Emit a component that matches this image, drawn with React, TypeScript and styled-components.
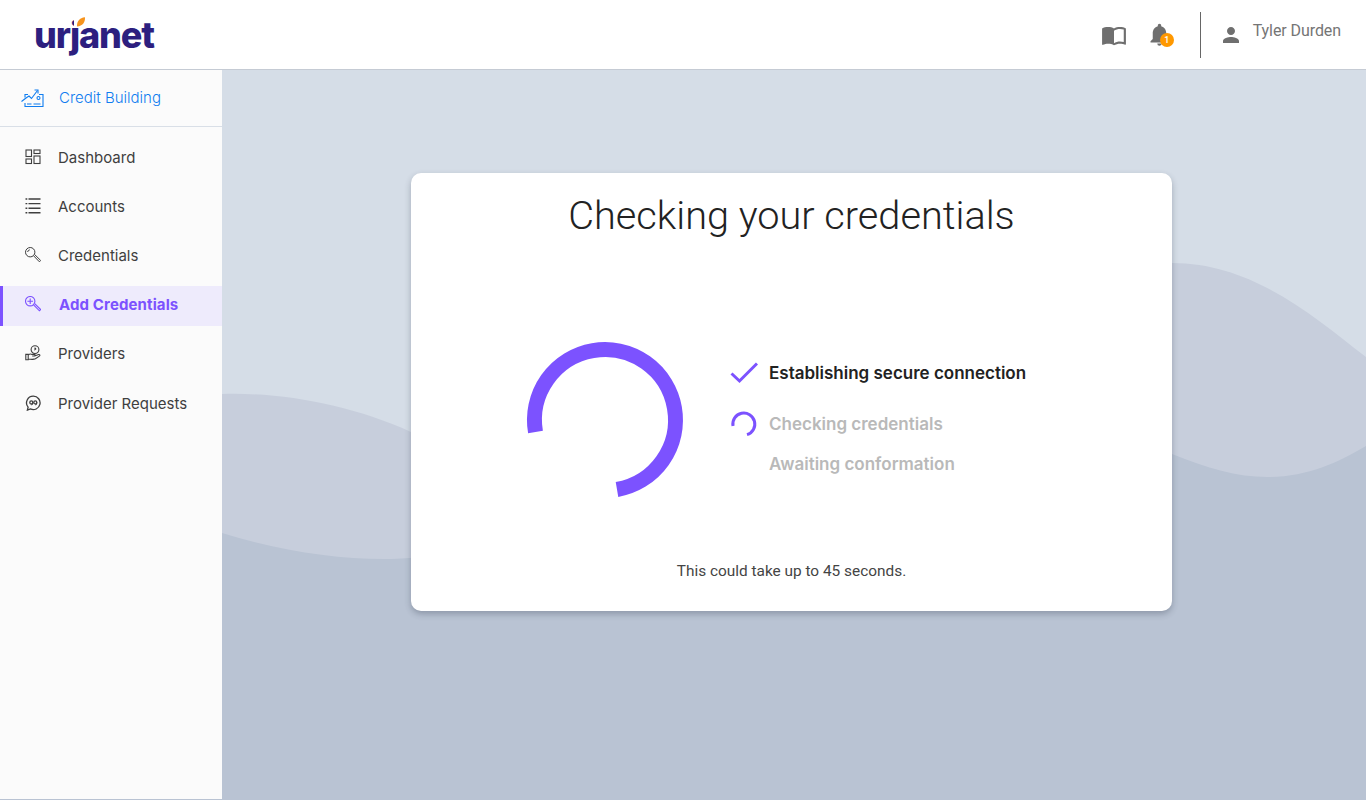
import React from 'react'
import styled, { createGlobalStyle } from 'styled-components'
import { MdImportContacts, MdNotifications, MdPerson } from 'react-icons/md'

const colors = {
  purple: '#7c52ff',
  blue: '#0f7df0',
  text: '#3f3f3f',
  dark: '#222222',
  muted: '#b9b9b9',
  grey: '#6f6f6f',
}

const GlobalStyle = createGlobalStyle`
  html, body {
    margin: 0;
    height: 100%;
    overflow: hidden;
    font-family: Inter, "Liberation Sans", sans-serif;
  }
  #root { height: 100%; }
`

const DashboardIcon = () => (
  <NavSvg viewBox="0 0 16 16" fill="none" stroke="currentColor" strokeWidth="1.1">
    <rect x="1" y="1" width="5.5" height="6.5" />
    <rect x="9" y="1" width="6" height="3.5" />
    <rect x="1" y="10" width="5.5" height="4.500" />
    <rect x="9" y="7" width="6" height="7.500" />
  </NavSvg>
)

const ListIcon = () => (
  <NavSvg viewBox="0 0 16 16" fill="none" stroke="currentColor" strokeWidth="1.4">
    <path d="M0.500 1h1.800M3.500 1h12M0.500 5.600h1.800M3.500 5.600h12M0.500 10.200h1.800M3.500 10.200h12M0.500 14.800h1.800M3.500 14.800h12" />
  </NavSvg>
)

const KeyIcon = () => (
  <NavSvg viewBox="0 0 16 16" fill="none" stroke="currentColor" strokeWidth="1">
    <circle cx="5.200" cy="5.200" r="4.700" />
    <path d="M8.600 8.800l5.800 6 1.300-1.300-6-5.900M2.600 5a2.600 2.600 0 0 1 2.200-2.200" />
  </NavSvg>
)

const AddKeyIcon = () => (
  <NavSvg viewBox="0 0 16 16" fill="none" stroke="currentColor" strokeWidth="1.1">
    <circle cx="5.200" cy="5.200" r="4.700" />
    <path d="M8.600 8.800l5.800 6 1.300-1.300-6-5.900M5.200 2.400v5.600M2.400 5.200H8" />
  </NavSvg>
)

const ProvidersIcon = () => (
  <NavSvg viewBox="0 0 16 16" fill="none" stroke="currentColor" strokeWidth="1.1">
    <circle cx="10" cy="4.600" r="3.900" />
    <path d="M10 2.600v2l1.200-1M.8 9.400h2.400v5.400H.8zM3.200 10c1.400-1.200 2.600-1.200 3.800-.6h2.400c1 0 1 1.600 0 1.600H7.200M9.600 11l4-1.500c1.200-.3 1.800.9.800 1.600l-4 2.700c-1.600.8-4.400.6-7.200.2" />
  </NavSvg>
)

const RequestsIcon = () => (
  <NavSvg viewBox="0 0 16 16" fill="none" stroke="currentColor" strokeWidth="1.3">
    <path d="M8.400 1.200a6.700 6.700 0 1 1-3 12.700l-3 1.200.7-2.900A6.700 6.700 0 0 1 8.400 1.200z" />
    <circle cx="6.300" cy="7.400" r="1.500" />
    <circle cx="10.300" cy="7.400" r="1.500" />
    <path d="M7.800 7.600c0 1.300-.5 2-1.400 2.400M11.800 7.600c0 1.300-.5 2-1.400 2.400" />
  </NavSvg>
)

const CreditIcon = () => (
  <svg width="23" height="19" viewBox="0 0 23 19" fill="none" stroke={colors.blue} strokeWidth="1.100">
    <path d="M4 8.500V5.500h3M18 5.500h4V17.500H4V14" />
    <path d="M0.500 12.500L5 9l3-2 2.500 2.500L16.500 1.500" />
    <path d="M13.500 1h3.500v3.500" />
    <circle cx="17.500" cy="9" r="1.500" />
    <path d="M6 15h4.500M12.500 15h7" />
  </svg>
)

const navItems = [
  { name: 'Dashboard', Icon: DashboardIcon },
  { name: 'Accounts', Icon: ListIcon },
  { name: 'Credentials', Icon: KeyIcon },
  { name: 'Add Credentials', Icon: AddKeyIcon, active: true },
  { name: 'Providers', Icon: ProvidersIcon },
  { name: 'Provider Requests', Icon: RequestsIcon },
]

export default function App() {
  return (
    <Page>
      <GlobalStyle />
      <Header>
        <Logo>
          urjanet
          <Leaf viewBox="0 0 11 10">
            <path d="M2.500 9.500C2.200 4.500 5 0.800 10.500 0.300 10.800 5.500 8 9.200 2.500 9.500z" fill="#f7941d" />
          </Leaf>
        </Logo>
        <HeaderRight>
          <HeaderIcon>
            <MdImportContacts size={26} />
          </HeaderIcon>
          <BellWrap>
            <MdNotifications size={27} />
            <Badge>1</Badge>
          </BellWrap>
          <Divider />
          <MdPerson size={24} />
          <UserName>Tyler Durden</UserName>
        </HeaderRight>
      </Header>

      <Body>
        <Sidebar>
          <SectionRow>
            <CreditIcon />
            <SectionLabel>Credit Building</SectionLabel>
          </SectionRow>
          <NavList>
            {navItems.map(({ name, Icon, active }) => (
              <NavItem key={name} $active={!!active}>
                <Icon />
                <NavLabel $active={!!active}>{name}</NavLabel>
              </NavItem>
            ))}
          </NavList>
        </Sidebar>

        <Main>
          <Waves viewBox="0 0 1144 730" preserveAspectRatio="none">
            <path
              d="M0 324C60 322 130 335 189 362C420 470 760 193 950 193C1030 193 1090 245 1144 287V730H0Z"
              fill="#c7cedc"
            />
            <path
              d="M0 463C60 482 120 490 170 489C400 480 800 320 950 384C985 398 1015 407 1045 407C1085 407 1115 393 1144 376V730H0Z"
              fill="#b9c3d3"
            />
          </Waves>

          <Card>
            <Title>Checking your credentials</Title>
            <Progress>
              <svg width="160" height="160" viewBox="0 0 160 160" fill="none">
                <path d="M10.500 92A70.500 70.500 0 1 1 92 149.500" stroke={colors.purple} strokeWidth="15" />
              </svg>
              <Steps>
                <Step $state="done">
                  <StepIcon>
                    <svg width="28" height="24" viewBox="0 0 28 24" fill="none">
                      <path d="M1.500 12.500L9.500 20L27 2.500" stroke={colors.purple} strokeWidth="3" />
                    </svg>
                  </StepIcon>
                  Establishing secure connection
                </Step>
                <StepGap />
                <Step $state="pending">
                  <StepIcon>
                    <svg width="28" height="28" viewBox="0 0 28 28" fill="none">
                      <path d="M3 16A11 11 0 1 1 17 24.600" stroke={colors.purple} strokeWidth="3" />
                    </svg>
                  </StepIcon>
                  Checking credentials
                </Step>
                <Step $state="pending">
                  <StepIcon />
                  Awaiting conformation
                </Step>
              </Steps>
            </Progress>
            <Note>This could take up to 45 seconds.</Note>
          </Card>
        </Main>
      </Body>
    </Page>
  )
}

const Page = styled.div`
  height: 100%;
  display: flex;
  flex-direction: column;
`

const Header = styled.header`
  height: 69px;
  flex: none;
  display: flex;
  align-items: center;
  justify-content: space-between;
  padding: 0 25px 0 34px;
  background: #fff;
  border-bottom: 1px solid #c5cbd4;
`

const Logo = styled.div`
  position: relative;
  font-family: Inter, sans-serif;
  font-size: 36px;
  font-weight: 800;
  letter-spacing: -1.2px;
  line-height: 44px;
  color: #2d1f7f;
`

const Leaf = styled.svg`
  position: absolute;
  left: 40px;
  top: 4px;
  width: 12px;
  height: 10px;
  background: #fff;
`

const HeaderRight = styled.div`
  display: flex;
  align-items: center;
  color: ${colors.grey};
`

const HeaderIcon = styled.div`
  display: flex;
  margin-right: 19px;
`

const BellWrap = styled.div`
  position: relative;
  display: flex;
  margin-right: 27px;
`

const Badge = styled.span`
  position: absolute;
  right: -1px;
  bottom: 1px;
  width: 14px;
  height: 14px;
  border-radius: 50%;
  background: #ff9800;
  color: #fff;
  font: 500 9px/14px Roboto, sans-serif;
  text-align: center;
`

const Divider = styled.div`
  width: 1px;
  height: 46px;
  margin-right: 18px;
  background: #666;
`

const UserName = styled.span`
  margin-left: 10px;
  padding-bottom: 8px;
  font: 400 16px/20px Roboto, sans-serif;
  letter-spacing: -0.08px;
  color: #757575;
`

const Body = styled.div`
  flex: 1;
  display: flex;
  min-height: 0;
`

const Sidebar = styled.aside`
  width: 222px;
  flex: none;
  box-sizing: border-box;
  background: #fbfbfb;
  border-bottom: 1px solid #b9c3d3;
`

const SectionRow = styled.div`
  height: 56px;
  display: flex;
  align-items: center;
  gap: 15px;
  padding-left: 21px;
  border-bottom: 1px solid #d9dfe7;
`

const SectionLabel = styled.span`
  padding-bottom: 1px;
  font-size: 15px;
  font-weight: 300;
  color: ${colors.blue};
`

const NavList = styled.nav`
  display: flex;
  flex-direction: column;
  gap: 9px;
  padding-top: 10px;
`

const NavItem = styled.div<{ $active: boolean }>`
  height: 40px;
  display: flex;
  align-items: center;
  gap: ${({ $active }) => ($active ? '18px' : '17px')};
  box-sizing: border-box;
  padding-left: ${({ $active }) => ($active ? '22px' : '25px')};
  padding-bottom: ${({ $active }) => ($active ? '4px' : '0')};
  margin: ${({ $active }) => ($active ? '2px 0 -2px' : '0')};
  border-left: ${({ $active }) => ($active ? `3px solid ${colors.purple}` : 'none')};
  background: ${({ $active }) => ($active ? '#eeebfc' : 'transparent')};
  color: ${({ $active }) => ($active ? colors.purple : colors.text)};

  &:last-child {
    margin-top: 1px;
  }
`

const NavSvg = styled.svg`
  width: 16px;
  height: 16px;
  flex: none;
`

const NavLabel = styled.span<{ $active: boolean }>`
  font-size: 15px;
  font-weight: ${({ $active }) => ($active ? 700 : 400)};
  letter-spacing: ${({ $active }) => ($active ? '0.12px' : '0')};
`

const Main = styled.main`
  position: relative;
  flex: 1;
  overflow: hidden;
  background: #d5dde7;
  padding: 103px 0 0 189px;
`

const Waves = styled.svg`
  position: absolute;
  inset: 0;
  width: 100%;
  height: 100%;
`

const Card = styled.section`
  position: relative;
  width: 761px;
  height: 438px;
  display: flex;
  flex-direction: column;
  align-items: center;
  border-radius: 10px;
  background: #fff;
  box-shadow: 0 3px 6px rgba(40, 50, 70, 0.3);
`

const Title = styled.h1`
  margin: 20px 0 0;
  font: 300 39.7px/46px Roboto, sans-serif;
  color: ${colors.dark};
`

const Progress = styled.div`
  align-self: stretch;
  display: flex;
  align-items: flex-start;
  gap: 45px;
  padding: 101px 0 0 114px;
`

const Steps = styled.div`
  display: flex;
  flex-direction: column;
  padding-top: 13px;
`

const StepGap = styled.div`
  height: 11px;
`

const Step = styled.div<{ $state: 'done' | 'pending' }>`
  height: 40px;
  display: flex;
  align-items: center;
  gap: 11px;
  font-size: 17px;
  font-weight: 600;
  color: ${({ $state }) => ($state === 'done' ? colors.dark : colors.muted)};
`

const StepIcon = styled.span`
  width: 28px;
  display: flex;
  flex: none;
`

const Note = styled.p`
  margin: auto 0 30px;
  font: 400 15.4px/20px Roboto, sans-serif;
  color: #444;
`
